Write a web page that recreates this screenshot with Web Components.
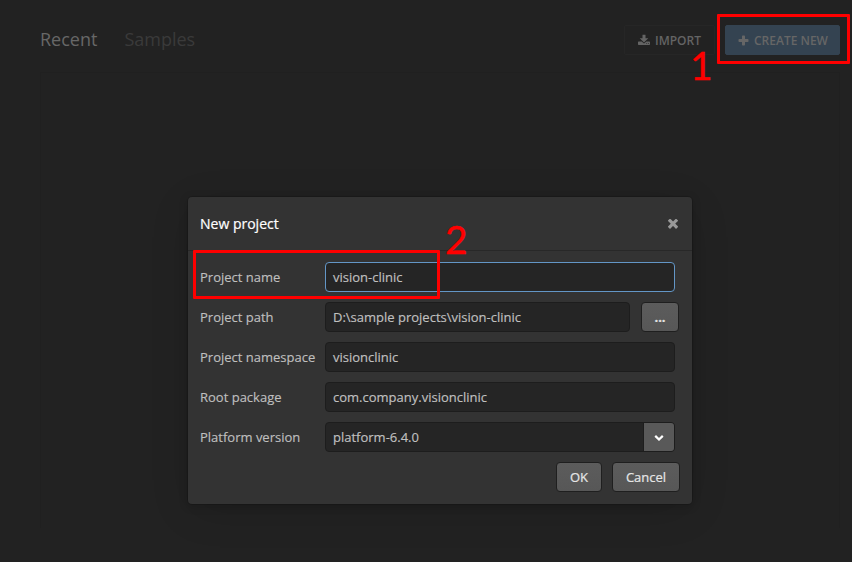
<!DOCTYPE html>
<html lang="en"><head><meta charset="utf-8"><title>New project</title>
<style>
html,body{margin:0;height:100%;overflow:hidden;background:#222}
body{font-family:"Open Sans","Noto Sans",sans-serif;font-size:13px;position:relative;width:852px;height:562px}
</style></head><body>
<project-hub></project-hub>
<modal-dialog heading="New project">
  <form-row label="Project name"><text-box focused value="vision-clinic"></text-box></form-row>
  <form-row label="Project path"><text-box style="flex:0 0 305px" value="D:\sample projects\vision-clinic"></text-box><push-button style="width:38px;margin-left:11px"><b>...</b></push-button></form-row>
  <form-row label="Project namespace"><text-box value="visionclinic"></text-box></form-row>
  <form-row label="Root package"><text-box value="com.company.visionclinic"></text-box></form-row>
  <form-row label="Platform version"><text-box value="platform-6.4.0"><span class="drop"></span></text-box></form-row>
  <push-button slot="footer" style="width:46px">OK</push-button>
  <push-button slot="footer" style="width:68px">Cancel</push-button>
</modal-dialog>
<call-out style="left:717px;top:14px;width:133px;height:50px;--nx:-27px;--ny:37px" number="1"></call-out>
<call-out style="left:193px;top:250px;width:247px;height:49px;--nx:252px;--ny:-25px" number="2"></call-out>
<script>
function define(name, render){
  customElements.define(name, class extends HTMLElement{
    connectedCallback(){
      if(this.shadowRoot) return;
      this.attachShadow({mode:'open'}).innerHTML = render(this);
    }
  });
}
define('project-hub', () => `<style>
:host{display:block;box-sizing:border-box;height:562px;padding:25px 12px 0 40px;background:#222}
header{display:flex;height:30px;align-items:center;font-size:18px;color:#676767}
.tab{margin-right:27px;line-height:28px;height:30px}.off{color:#3a3a3a}
.grow{flex:1}
.btn{box-sizing:border-box;height:30px;display:flex;align-items:center;font-size:12px;font-weight:600;border-radius:2px;color:#646464;border:1px solid #262626;white-space:nowrap}
.imp{width:91px;padding-left:13px;margin-right:10px}
.new{width:115px;padding-left:12px;background:#344351;border-color:#344351;color:#666}
svg{display:block;margin-right:5px}
main{margin-top:17px;height:456px;border:1px solid #202020;border-bottom:0;box-sizing:border-box}
</style>
<header><span class="tab">Recent</span><span class="tab off">Samples</span><span class="grow"></span>
<span class="btn imp"><svg width="12" height="12" viewBox="0 0 12 12" fill="currentColor"><path d="M4.5 .8h3v3.5h2.8L6 8.5 1.7 4.3h2.8z"/><path d="M.7 7.4h3L6 9.6l2.3-2.2h3q.7 0 .7.7v2.2q0 .7-.7.7H.7q-.7 0-.7-.7V8.1q0-.7.7-.7zM8.3 9.3v.8h.8v-.8zm1.7 0v.8h.8v-.8z" fill-rule="evenodd"/></svg>IMPORT</span>
<span class="btn new"><svg width="11" height="11" viewBox="0 0 11 11" fill="currentColor"><path d="M4.8.5h1.4q.8 0 .8.8V4h2.7q.8 0 .8.8v1.4q0 .8-.8.8H7v2.7q0 .8-.8.8H4.8q-.8 0-.8-.8V7H1.3q-.8 0-.8-.8V4.8Q.5 4 1.3 4H4V1.3q0-.8.8-.8z"/></svg>CREATE NEW</span></header><main></main>`);
define('modal-dialog', el => `<style>
:host{display:block;position:absolute;left:188px;top:197px;width:504px;height:307px;box-sizing:border-box;background:#333;border-radius:4px;box-shadow:0 2px 10px rgba(0,0,0,.18),0 8px 40px -6px rgba(0,0,0,.18),0 0 0 1px rgba(0,0,0,.12)}
header{height:54px;box-sizing:border-box;border-bottom:1px solid #282828;display:flex;justify-content:space-between;align-items:center;padding:0 14px 0 12px;font-size:14px;color:#fff;-webkit-text-stroke:.2px #fff}
section{display:grid;gap:10px;padding:11px 17px 0 12px}
footer{display:flex;justify-content:flex-end;gap:10px;padding:10px 12px 0 0}
svg{display:block}
</style><header><span>${el.getAttribute('heading')}</span><svg width="10" height="10" viewBox="0 0 10 10"><path d="M2 1.7l6 6M8 1.7L2 7.7" stroke="#999" stroke-width="3.1" stroke-linecap="square"/></svg></header>
<section><slot></slot></section><footer><slot name="footer"></slot></footer>`);
define('form-row', el => `<style>
:host{display:flex;height:30px;align-items:center;color:#bfbfbf;min-width:0;font-size:13px;-webkit-text-stroke:.15px currentColor}
label{flex:0 0 125px;white-space:nowrap}
</style><label>${el.getAttribute('label')}</label><slot></slot>`);
define('text-box', el => `<style>
:host{flex:1;box-sizing:border-box;height:30px;display:flex;align-items:center;background:#252525;border:1px solid #1d1d1d;border-radius:4px;padding-left:7px;color:#c0c0c0;white-space:nowrap;overflow:hidden}
:host([focused]){border-color:#6396c6}
.v{flex:1}
.drop{width:30px;height:28px;background:#595959;border-left:1px solid #1d1d1d;display:flex;align-items:center;justify-content:center}
</style><span class="v">${el.getAttribute('value')}</span>${el.querySelector('.drop') ? `<span class="drop"><svg width="10" height="8" viewBox="0 0 10 8"><path d="M2 3.6L5 6.5 8 3.6" fill="none" stroke="#fff" stroke-width="2.2" stroke-linecap="square"/></svg></span>` : ''}`);
define('push-button', () => `<style>
:host{box-sizing:border-box;flex-shrink:0;height:30px;display:flex;align-items:center;justify-content:center;background:linear-gradient(#5c5c5c,#575757);border:1px solid #1f1f1f;border-radius:4px;color:#e6e6e6;font-size:13px;-webkit-text-stroke:.2px #e6e6e6}
</style><slot></slot>`);
define('call-out', el => `<style>
:host{display:block;position:absolute;box-sizing:border-box;border:3px solid #f00;border-radius:1px}
span{position:absolute;left:calc(var(--nx) - 3px);top:calc(var(--ny) - 3px);font:39px/28px Lato,sans-serif;color:#f00;-webkit-text-stroke:.4px #f00}
</style><span>${el.getAttribute('number')}</span>`);
</script></body></html>
